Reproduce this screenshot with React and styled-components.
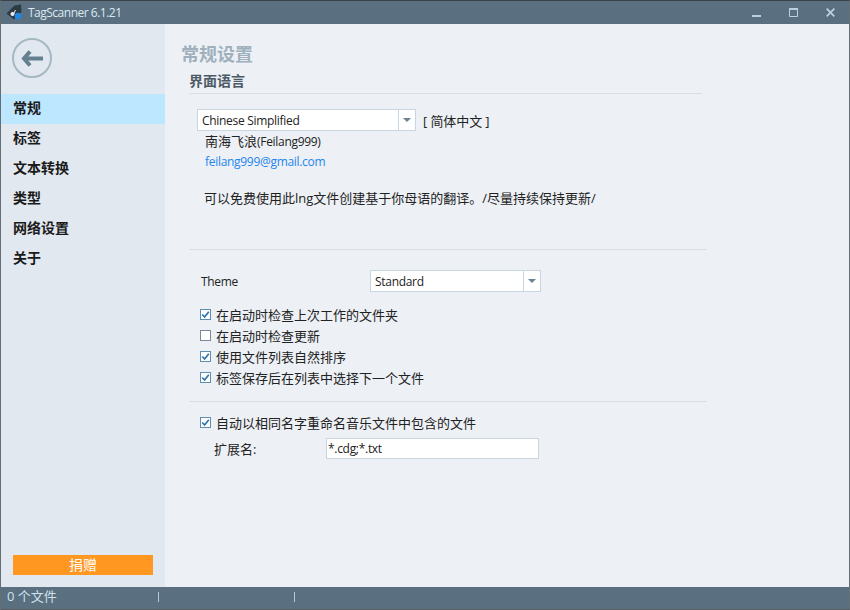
import React from 'react';
import styled, { createGlobalStyle } from 'styled-components';

const Global = createGlobalStyle`
  html, body { margin: 0; padding: 0; height: 100%; overflow: hidden; }
  body { font-family: "Open Sans", "Noto Sans CJK SC", sans-serif; font-size: 13px; color: #222; }
`;

const Win = styled.div`
  width: 850px;
  height: 610px;
  box-sizing: border-box;
  display: flex;
  flex-direction: column;
  background: #edf0f5;
  border: 1px solid #666e75;
  border-top-color: #3c4247;
  border-bottom-color: #5b5f63;
`;

const TitleBar = styled.div`
  height: 23px;
  background: #5a7080;
  display: flex;
  align-items: center;
  padding-left: 5px;
  color: #dce8f0;
`;

const AppName = styled.span`
  margin-left: 5px;
  flex: 1;
  font-size: 12px;
  letter-spacing: -0.5px;
`;

const WinButton = styled.div`
  width: 37px;
  height: 23px;
  display: flex;
  align-items: center;
  justify-content: center;
`;

const Body = styled.div`
  flex: 1;
  display: flex;
  min-height: 0;
`;

const Sidebar = styled.div`
  width: 164px;
  background: #e2e8ef;
  display: flex;
  flex-direction: column;
`;

const BackButton = styled.div`
  width: 36px;
  height: 36px;
  margin: 14px 0 0 11px;
  border: 2px solid #a5b8c3;
  border-radius: 50%;
  display: flex;
  align-items: center;
  justify-content: center;
`;

const Nav = styled.div`
  margin-top: 16px;
  flex: 1;
`;

const NavItem = styled.div`
  height: 30px;
  line-height: 28px;
  padding-left: 12px;
  font-size: 14px;
  font-weight: 700;
  color: #1a1a1a;
  background: ${p => (p.$active ? '#bde6ff' : 'transparent')};
`;

const Donate = styled.div`
  height: 20px;
  line-height: 19px;
  margin: 0 12px 12px;
  background: #ff9721;
  color: #fff;
  text-align: center;
  font-size: 14px;
`;

const Main = styled.div`
  flex: 1;
  padding: 19px 0 0 16px;
`;

const PageTitle = styled.div`
  font-size: 18px;
  font-weight: 700;
  color: #9fb0bd;
  line-height: 22px;
`;

const SectionHead = styled.div`
  margin: 6px 0 0 8px;
  width: 513px;
  height: 22px;
  line-height: 19px;
  font-size: 14px;
  font-weight: 700;
  color: #4c5a66;
  border-bottom: 1px solid #d8dfe6;
`;

const LangRow = styled.div`
  display: flex;
  align-items: center;
  margin: 15px 0 0 16px;
`;

const Combo = styled.div`
  width: ${p => p.$w}px;
  height: 22px;
  box-sizing: border-box;
  background: #fff;
  border: 1px solid #c8d6df;
  display: flex;
  align-items: center;
  padding-left: 4px;
  color: #222;
`;

const ComboText = styled.span`
  flex: 1;
`;

const ComboArrow = styled.span`
  width: 16px;
  height: 20px;
  border-left: 1px solid #c8d6df;
  display: flex;
  align-items: center;
  justify-content: center;
  &::after {
    content: '';
    border-left: 4px solid transparent;
    border-right: 4px solid transparent;
    border-top: 4px solid #6a8294;
  }
`;

const Latin = styled.span`
  font-size: 12px;
  letter-spacing: -0.3px;
`;

const LangNote = styled.span`
  margin-left: 7px;
  letter-spacing: -0.1px;
`;

const Author = styled.div`
  height: 20px;
  margin: 0 0 0 24px;
  line-height: 20px;
`;

const Mail = styled.div`
  height: 20px;
  margin: 0 0 0 24px;
  line-height: 20px;
  color: #1e86ee;
`;

const Note = styled.div`
  margin: 18px 0 0 23px;
  line-height: 18px;
`;

const Rule = styled.div`
  width: 518px;
  height: 1px;
  margin: ${p => p.$top}px 0 0 8px;
  background: #d8dfe6;
`;

const ThemeRow = styled.div`
  display: flex;
  align-items: center;
  margin: 20px 0 0 20px;
`;

const RowLabel = styled.span`
  width: ${p => p.$w}px;
`;

const Checks = styled.div`
  margin: ${p => p.$top}px 0 0 19px;
  display: flex;
  flex-direction: column;
`;

const CheckRow = styled.div`
  height: 21px;
  display: flex;
  align-items: center;
  gap: 5px;
`;

const Box = styled.span`
  width: 11px;
  height: 11px;
  box-sizing: border-box;
  background: #fff;
  border: 1px solid ${p => (p.$on ? '#5d8fb0' : '#7b8a96')};
  display: flex;
`;

const ExtRow = styled.div`
  display: flex;
  align-items: center;
  margin: 5px 0 0 33px;
`;

const Field = styled.div`
  width: 213px;
  height: 21px;
  box-sizing: border-box;
  background: #fff;
  border: 1px solid #c8d6df;
  padding-left: 1px;
  line-height: 19px;
`;

const StatusBar = styled.div`
  height: 22px;
  background: #5a7080;
  color: #cfe2ee;
  display: flex;
  font-size: 13px;
`;

const StatusCell = styled.div`
  width: ${p => p.$w}px;
  height: 100%;
  box-sizing: border-box;
  padding-left: 6px;
  line-height: 19px;
  position: relative;
  &::after {
    content: '';
    position: absolute;
    right: 0;
    top: 5px;
    height: 10px;
    width: 1px;
    background: #b9cad6;
  }
`;

const Check = ({ on, children }) => (
  <CheckRow>
    <Box $on={on}>
      {on && (
        <svg width="9" height="9" viewBox="0 0 9 9">
          <path d="M1.2 4.5 L3.6 7 L7.8 1.8" fill="none" stroke="#2f75a8" strokeWidth="1.7" />
        </svg>
      )}
    </Box>
    {children}
  </CheckRow>
);

export default function App() {
  return (
    <Win>
      <Global />
      <TitleBar>
        <svg width="17" height="17" viewBox="0 0 17 17">
          <path d="M.5 9.5 L8.5 1.5 L15 .5 L15.5 8 L8 15.5 Z" fill="#2c3a44" />
          <circle cx="6.5" cy="10" r="2" fill="#f2f2f2" />
          <path d="M7.5 10 L9.5 6" stroke="#f2f2f2" strokeWidth="1" />
          <circle cx="12" cy="12" r="3.3" fill="#1e86e6" />
        </svg>
        <AppName>TagScanner 6.1.21</AppName>
        <WinButton>
          <svg width="9" height="10" viewBox="0 0 9 10">
            <rect x="0" y="7" width="9" height="2" fill="#b8d0e0" />
          </svg>
        </WinButton>
        <WinButton>
          <svg width="9" height="9" viewBox="0 0 9 9">
            <path d="M.5 1.5 H8.5 V8.5 H.5 Z" fill="none" stroke="#b8d0e0" />
            <rect x="0" y="0" width="9" height="2" fill="#b8d0e0" />
          </svg>
        </WinButton>
        <WinButton>
          <svg width="9" height="9" viewBox="0 0 9 9">
            <path d="M.7 .7 L8.3 8.3 M8.3 .7 L.7 8.3" stroke="#b8d0e0" strokeWidth="1.8" />
          </svg>
        </WinButton>
      </TitleBar>
      <Body>
        <Sidebar>
          <BackButton>
            <svg width="22" height="17" viewBox="0 0 22 17">
              <path d="M9 1.5 L3 8.5 L9 15.5 M3.5 8.5 H22" fill="none" stroke="#648090" strokeWidth="4" />
            </svg>
          </BackButton>
          <Nav>
            <NavItem $active>常规</NavItem>
            <NavItem>标签</NavItem>
            <NavItem>文本转换</NavItem>
            <NavItem>类型</NavItem>
            <NavItem>网络设置</NavItem>
            <NavItem>关于</NavItem>
          </Nav>
          <Donate>捐赠</Donate>
        </Sidebar>
        <Main>
          <PageTitle>常规设置</PageTitle>
          <SectionHead>界面语言</SectionHead>
          <LangRow>
            <Combo $w={219}>
              <ComboText><Latin>Chinese Simplified</Latin></ComboText>
              <ComboArrow />
            </Combo>
            <LangNote>[ 简体中文 ]</LangNote>
          </LangRow>
          <Author>南海飞浪<Latin>(Feilang999)</Latin></Author>
          <Mail><Latin>feilang999@gmail.com</Latin></Mail>
          <Note>可以免费使用此lng文件创建基于你母语的翻译。/尽量持续保持更新/</Note>
          <Rule $top={42} />
          <ThemeRow>
            <RowLabel $w={169}><Latin>Theme</Latin></RowLabel>
            <Combo $w={171}>
              <ComboText><Latin>Standard</Latin></ComboText>
              <ComboArrow />
            </Combo>
          </ThemeRow>
          <Checks $top={12}>
            <Check on>在启动时检查上次工作的文件夹</Check>
            <Check>在启动时检查更新</Check>
            <Check on>使用文件列表自然排序</Check>
            <Check on>标签保存后在列表中选择下一个文件</Check>
          </Checks>
          <Rule $top={13} />
          <Checks $top={10}>
            <Check on>自动以相同名字重命名音乐文件中包含的文件</Check>
          </Checks>
          <ExtRow>
            <RowLabel $w={112}>扩展名:</RowLabel>
            <Field><Latin>*.cdg;*.txt</Latin></Field>
          </ExtRow>
        </Main>
      </Body>
      <StatusBar>
        <StatusCell $w={158}>0 个文件</StatusCell>
        <StatusCell $w={136} />
      </StatusBar>
    </Win>
  );
}
